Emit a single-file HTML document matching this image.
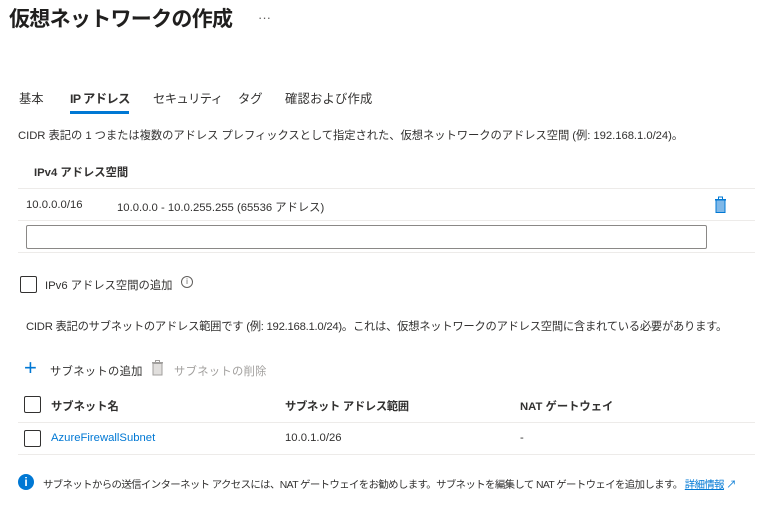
<!DOCTYPE html>
<html><head><meta charset="utf-8"><style>
body{margin:0;width:762px;height:523px;background:#fff;position:relative;overflow:hidden;font-family:"Liberation Sans","Noto Sans CJK JP",sans-serif;color:#323130;font-size:11.3px}
.a{position:absolute;white-space:nowrap}
.hr{position:absolute;height:1px;background:#edebe9}
.cb{position:absolute;width:15px;height:15px;border:1px solid #323130;border-radius:2px}
.t{font-size:12.3px}
</style></head><body>
<div class="a" style="left:9px;top:3px;font-size:21px;font-weight:bold;color:#201f1e;letter-spacing:-0.7px">仮想ネットワークの作成</div>
<div class="a" style="left:258px;top:10px;font-size:13px;color:#605e5c">···</div>
<div class="a t" style="left:19px;top:89px">基本</div>
<div class="a t" style="left:70px;top:89px;font-weight:bold;letter-spacing:-0.6px">IP アドレス</div>
<div style="position:absolute;left:70px;top:111px;width:59px;height:3px;background:#0078d4"></div>
<div class="a t" style="left:153px;top:89px;letter-spacing:-0.6px">セキュリティ</div>
<div class="a t" style="left:238px;top:89px">タグ</div>
<div class="a t" style="left:285px;top:89px;letter-spacing:0.2px">確認および作成</div>
<div class="a" style="left:18px;top:127px;letter-spacing:-0.05px">CIDR 表記の 1 つまたは複数のアドレス プレフィックスとして指定された、仮想ネットワークのアドレス空間 (例: 192.168.1.0/24)。</div>
<div class="a" style="left:34px;top:164px;font-weight:bold">IPv4 アドレス空間</div>
<div class="hr" style="left:18px;top:188px;width:737px"></div>
<div class="a" style="left:26px;top:199px">10.0.0.0/16</div>
<div class="a" style="left:117px;top:199px">10.0.0.0 - 10.0.255.255 (65536 アドレス)</div>
<svg class="a" style="left:713px;top:196px" width="16" height="18" viewBox="0 0 16 18"><rect x="2" y="3" width="11" height="1.5" fill="#0078d4"/><rect x="5.5" y="1" width="4" height="2.5" fill="none" stroke="#0078d4"/><rect x="3" y="4" width="9" height="12.5" fill="#7fb8e8" stroke="#0078d4"/></svg>
<div class="hr" style="left:18px;top:220px;width:737px"></div>
<div style="position:absolute;left:26px;top:225px;width:679px;height:22px;border:1px solid #8a8886;border-radius:2px"></div>
<div class="hr" style="left:18px;top:252px;width:737px"></div>
<div class="cb" style="left:20px;top:276px"></div>
<div class="a" style="left:45px;top:277px;letter-spacing:0px">IPv6 アドレス空間の追加</div>
<div class="a" style="left:181px;top:276px;width:10px;height:10px;border:1px solid #605e5c;border-radius:50%;font-size:8px;line-height:10px;text-align:center;color:#605e5c">i</div>
<div class="a" style="left:26px;top:318px;letter-spacing:-0.25px">CIDR 表記のサブネットのアドレス範囲です (例: 192.168.1.0/24)。これは、仮想ネットワークのアドレス空間に含まれている必要があります。</div>
<div class="a" style="left:24px;top:357px;font-size:22px;color:#0078d4;font-weight:300;line-height:22px">+</div>
<div class="a" style="left:50px;top:363px;letter-spacing:0.3px">サブネットの追加</div>
<svg class="a" style="left:151px;top:360px" width="13" height="16" viewBox="0 0 13 16"><rect x="1" y="2" width="11" height="1.5" fill="#a19f9d"/><rect x="4.5" y="0.5" width="4" height="2" fill="none" stroke="#a19f9d"/><rect x="2" y="3.5" width="9" height="11.5" fill="#e1dfdd" stroke="#a19f9d"/></svg>
<div class="a" style="left:174px;top:363px;color:#a19f9d;letter-spacing:0.3px">サブネットの削除</div>
<div class="cb" style="left:24px;top:396px"></div>
<div class="a" style="left:51px;top:398px;font-weight:bold">サブネット名</div>
<div class="a" style="left:285px;top:398px;font-weight:bold;letter-spacing:-0.3px">サブネット アドレス範囲</div>
<div class="a" style="left:520px;top:398px;font-weight:bold">NAT ゲートウェイ</div>
<div class="hr" style="left:18px;top:422px;width:737px"></div>
<div class="cb" style="left:24px;top:430px"></div>
<div class="a" style="left:51px;top:432px;color:#0078d4">AzureFirewallSubnet</div>
<div class="a" style="left:285px;top:432px">10.0.1.0/26</div>
<div class="a" style="left:520px;top:432px">-</div>
<div class="hr" style="left:18px;top:454px;width:737px"></div>
<div class="a" style="left:18px;top:474px;width:16px;height:16px;border-radius:50%;background:#0078d4;color:#fff;font-size:12px;font-weight:bold;line-height:16px;text-align:center">i</div>
<div class="a" style="left:43px;top:476px;font-size:10.4px;letter-spacing:-0.6px">サブネットからの送信インターネット アクセスには、NAT ゲートウェイをお勧めします。サブネットを編集して NAT ゲートウェイを追加します。 <span style="color:#0078d4;text-decoration:underline">詳細情報</span> <span style="color:#0078d4">↗</span></div>
</body></html>
